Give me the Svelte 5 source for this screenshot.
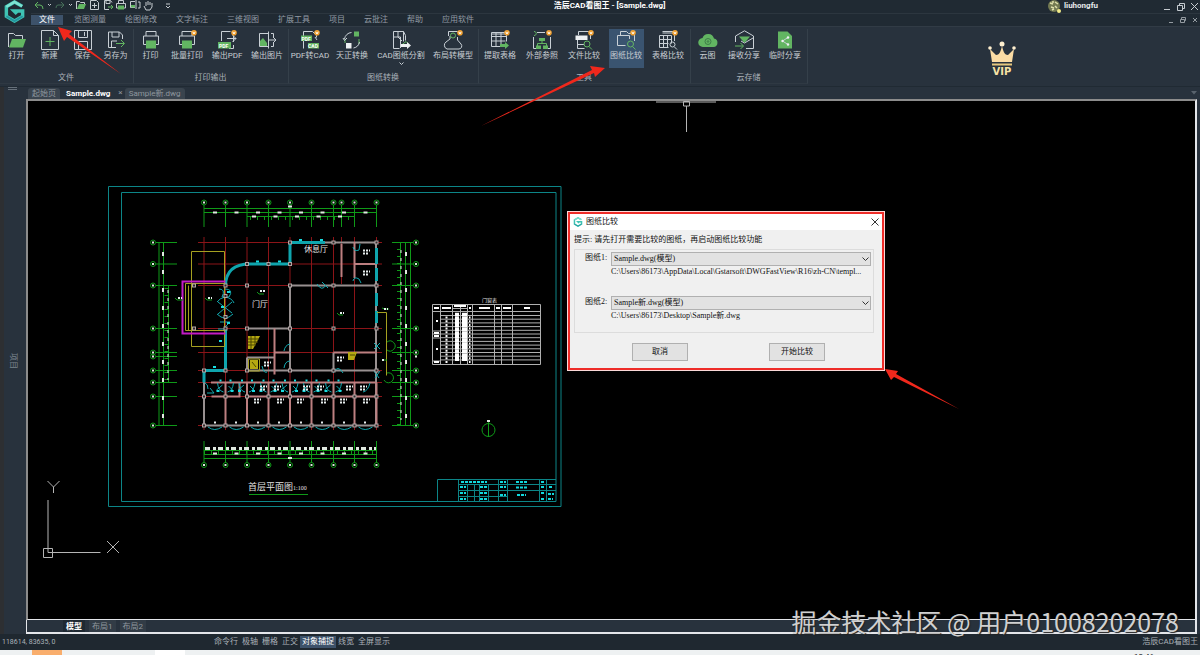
<script lang="ts">
  const menus = ['文件', '览图测量', '绘图修改', '文字标注', '三维视图', '扩展工具', '项目', '云批注', '帮助', '应用软件']

  const groups = [
    { title: '文件', tools: [
      { label: '打开', icon: 'open', size: 's' },
      { label: '新建', icon: 'new', size: 's' },
      { label: '保存', icon: 'save', size: 's' },
      { label: '另存为', icon: 'saveas', size: 's' },
    ] },
    { title: '打印输出', tools: [
      { label: '打印', icon: 'print', size: 's' },
      { label: '批量打印', icon: 'print', size: 'm', vip: true },
      { label: '输出PDF', icon: 'pdf', size: 'm', vip: true },
      { label: '输出图片', icon: 'image', size: 'm' },
    ] },
    { title: '图纸转换', tools: [
      { label: 'PDF转CAD', icon: 'pdfcad', size: 'l', vip: true },
      { label: '天正转换', icon: 'convert', size: 'l' },
      { label: 'CAD图纸分割', icon: 'split', size: 'xxl', more: true },
      { label: '布局转模型', icon: 'layout', size: 'xl', vip: true },
    ] },
    { title: '工具', tools: [
      { label: '提取表格', icon: 'table', size: 'l', vip: true },
      { label: '外部参照', icon: 'xref', size: 'l', vip: true },
      { label: '文件比较', icon: 'filecmp', size: 'l', vip: true },
      { label: '图纸比较', icon: 'dwgcmp', size: 'l', vip: true, active: true },
      { label: '表格比较', icon: 'tablecmp', size: 'l', vip: true },
    ] },
    { title: '云存储', tools: [
      { label: '云图', icon: 'cloud', size: 's' },
      { label: '接收分享', icon: 'receive', size: 'm' },
      { label: '临时分享', icon: 'share', size: 'l' },
    ] },
  ]

  const toggles = ['命令行', '极轴', '栅格', '正交', '对象捕捉', '线宽', '全屏显示']

  const drawings = [
    { id: 'dwg1', label: '图纸1:', name: 'Sample.dwg(模型)', path: 'C:\\Users\\86173\\AppData\\Local\\Gstarsoft\\DWGFastView\\R16\\zh-CN\\templ...' },
    { id: 'dwg2', label: '图纸2:', name: 'Sample新.dwg(模型)', path: 'C:\\Users\\86173\\Desktop\\Sample新.dwg' },
  ]

  // floor plan axes
  const cols = [204, 225.5, 247, 268.5, 290, 311.5, 333.5, 341.5, 354.5, 376.5]
  const bays = [204, 225.5, 247, 268.5, 290, 311.5, 333.5, 354.5, 376.5]
  const rows = [242.5, 264, 285.5, 328.5, 352.5, 356.5, 370.5, 382.5, 396.5, 425.5]
  const columns = [
    [290, 242.5], [333.5, 242.5], [376.5, 242.5], [247, 264], [268.5, 264], [290, 264],
    [225.5, 285.5], [247, 285.5], [290, 285.5], [333.5, 285.5], [376.5, 285.5],
    [225.5, 296], [225.5, 317], [225.5, 328.5], [247, 328.5], [290, 328.5], [333.5, 328.5], [376.5, 328.5],
    [194, 285.5], [194, 328.5], [204, 370.5], [225.5, 370.5], [247, 370.5], [290, 370.5], [333.5, 370.5], [376.5, 370.5],
    ...bays.map((x) => [x, 396.5]), ...bays.map((x) => [x, 425.5]),
  ]
  const notes = [[366, 252], [366, 273], [340, 359], [267, 364], [263, 388], [277, 388], [257, 401], [280, 401], [306, 388], [320, 388], [300, 401], [324, 401], [349, 388], [363, 388], [343, 401], [366, 401]]
  const tableCols = [440.5, 452.5, 460.5, 467.5, 472.5, 494.5, 501.5, 512.5]
  const tableRows = Array.from({ length: 13 }, (_, i) => 315.5 + i * 3.7)
</script>

{#snippet logo()}
  <svg class="mark" viewBox="0 0 24 24">
    <path d="M20 6.500 12 2 3.500 7v10l8.500 5 8.500-5v-5.500h-9l3 3" fill="none" stroke="#3fc4b4" stroke-width="3.600" />
    <path d="M3.500 7 12 2l8 4.500" fill="none" stroke="#7fe3d2" stroke-width="2.500" />
    <path d="M3.500 17l8.500 5 8.500-5" fill="none" stroke="#2496a0" stroke-width="2" />
  </svg>
{/snippet}

{#snippet icon(name, vip)}
  <svg class="icon" viewBox="0 0 20 20">
    {#if name === 'open'}
      <path d="M1.500 17V3.500h5l2 2h7V9" />
      <path class="g" d="M5 9h14l-3 8.500H2z" />
    {:else if name === 'new'}
      <path d="M1.500.5h12l5 5v14h-17zM13.500.5v5h5" />
      <path class="gl" d="M10 7v9M5.500 11.500h9" />
    {:else if name === 'save'}
      <path d="M1.500.5h17v19h-17zM5.500.5v7h9v-7M11.500 2v4M5.500 19v-7.500h9V19" />
    {:else if name === 'saveas'}
      <path d="M10 17.500H2.500V2h11l3 3v4M6 2v5h7V2M5.500 17v-6H11" />
      <path class="gl" d="M10 13.500h8M15 10l3.500 3.500L15 17" />
    {:else if name === 'print'}
      <path d="M5 6V1.500h10V6M5 14.500H2.500V6h15v8.500H15" />
      <path class="g" d="M5 10.500h10v8H5z" />
    {:else if name === 'pdf'}
      <path d="M4.500 11V1.500h9M16.500 12V5.500M10 8.500h9M15.500 5l3.500 3.500-3.500 3.500M12 18.500h4.500V15" />
      <path class="g" d="M1 12h13v6.500H1z" />
      <text x="2" y="17.500">PDF</text>
    {:else if name === 'image'}
      <path d="M11 3.500H2.500v13H11M11.500 1.500v17M14 3.500h2.500V7M16.500 13v3.500H14M11 10h8M16 7l3 3-3 3" />
      <path class="g" d="M3 16v-5l3-3 4 5v3z" />
    {:else if name === 'pdfcad'}
      <path d="M3.500 18.500v-17h9l4 4v2M15 7l2 3" />
      <path class="g" d="M1 5.500h11v5.500H1zM8 13h11v5.500H8z" />
      <text x="1.500" y="10.500">PDF</text><text x="8" y="18">CAD</text>
    {:else if name === 'convert'}
      <path class="gl" d="M3 13V9M17 9v5" />
      <path d="M2.500 9a7.500 7.500 0 0 1 7-6.500M17.500 12a7.500 7.500 0 0 1-6 6M1 8l1.500 2.500L5 8" />
      <path class="g" d="M12 1.500h5v5h-5z" />
      <path class="w" d="M4 13h5.500v5.500H4z" />
    {:else if name === 'split'}
      <path d="M2.500 1.500h10v10M2.500 1.500v17h6M2.500 7h7v11M7 1.500V7l4 4M12.500 1.500l2 4v5" />
      <path class="gl" d="M10 15.500l5-4 3 3" />
      <path class="w" d="M10 14h6v-2l4 3.500-4 3.500v-2h-6z" />
    {:else if name === 'layout'}
      <path d="M5.500 1.500h9M5.500 1.500V6M14.500 7v3l3.500 4a3 3 0 0 1-2 5H4a4 4 0 0 1-1-7l4-3V6" />
      <circle class="gl" cx="10" cy="5.500" r="2.500" />
    {:else if name === 'table'}
      <path d="M1.500 2.500h15v9M1.500 2.500v14h9M1.500 6.500h15M1.500 11h14M6 2.500v14M11 2.500v12M1.500 4h15" />
      <path class="g" d="M10 14h5v-2l4 3.500-4 3.500v-2h-5z" />
    {:else if name === 'xref'}
      <path d="M1.500 7v11.500h4M18.500 7v11.500h-4M5 2.500h8" />
      <path class="gl" d="M2 1.500c3 0 3 4 0 4M10 10v4M5.500 16v-2.500h9V16" />
      <path class="g" d="M7 8h6v3H7zM4 15.500h5V19H4zM11 15.500h5V19h-5z" />
    {:else if name === 'filecmp'}
      <path d="M4.500 5V1.500h10l2 2V9M3.500 10v8.500h7M3 14.500h7" />
      <path class="w" d="M1.500 5.500h12V10h-12z" />
      <path class="gl" d="M15 16.500l3 3" /><circle class="gl" cx="13" cy="14" r="3" />
    {:else if name === 'dwgcmp'}
      <path d="M4.500 5V1.500h6l2 2h6V11M1.500 5.500h12V9M1.500 5.500v10h8" />
      <path class="gl" d="M16.500 16.500l3 3" /><circle class="gl" cx="14.500" cy="14" r="3" />
    {:else if name === 'tablecmp'}
      <path d="M4.500 1.500h12M4.500 3h12M1.500 5.500h12v8M1.500 5.500v12h9M1.500 9.500h12M1.500 13.500h9M5.500 5.500v12M9.500 5.500v12M16.500 3v8" />
      <path d="M16.500 17l2.500 2.500" /><circle cx="14.500" cy="14.500" r="2.500" />
    {:else if name === 'cloud'}
      <path class="g" d="M5 17a4.500 4.500 0 0 1-.5-9A6 6 0 0 1 16 8.500 4.300 4.300 0 0 1 15.500 17z" />
      <circle class="d" cx="10" cy="11.500" r="3" /><circle class="d" cx="10" cy="11.500" r=".8" />
    {:else if name === 'receive'}
      <path d="M1.500 12V6L10.500.8 19.500 6v12.500H12M7 11l3.500 2L19 8" />
      <path class="g" d="M5 6.500h11L10.500 13z" />
      <path class="gl" d="M1 16h8M6.500 13l3 3-3 3" />
    {:else if name === 'share'}
      <path class="g" d="M3 1.500h9.500L17 6v12.500H3z" />
      <path d="M13 7.500L7.500 11l5.500 3.500" />
      <circle class="w" cx="13" cy="7.500" r="1.200" /><circle class="w" cx="7.500" cy="11" r="1.200" /><circle class="w" cx="13" cy="14.500" r="1.200" />
    {/if}
    {#if vip}
      <circle cx="17" cy="2.800" r="2.800" class="v" /><path d="M15.800 1.800L17 4l1.200-2.200" class="vl" />
    {/if}
  </svg>
{/snippet}

<div class="app">
  <header class="head">
    <div class="brand">{@render logo()}</div>
    <div class="bars">
      <div class="titlebar">
        <svg class="quick" width="140" height="12" viewBox="0 0 140 12">
          <path class="gl" d="M5 5h4q3 0 3 4M7 2L4 5l3 3" />
          <path d="M17 4l1.500 1.500L20 4M38 4l1.500 1.500L41 4" />
          <path class="dim" d="M32 5h-5q-2 0-2 3M30 2l3 3-3 3" />
          <path d="M45.500 9V1.500h3l1 1h4V4" /><path class="g" d="M48 4h7l-2 5h-7z" />
          <path d="M59.500.5h6l2 2v7h-8zM63.500 3v5M61 5.500h5" />
          <path d="M78 9.500h-4.500v-9h6l1.500 2M75 .5v3h4v-3" /><path class="gl" d="M77 7h5M80 5l2 2-2 2" />
          <path d="M87.500 3V.5h5V3M87 8h-1.500V3.500h9V8H93" /><path class="g" d="M87 5.500h6V9.500h-6z" />
          <path d="M104 1.500h-4.500v6h4.500M105 0v9M107 2h2v6h-2" /><path class="g" d="M100 5h4v2.500h-4z" />
          <path d="M113 6l2 4h4l2-3V3M115 6V2M117 5V1M119 5V2" />
          <path d="M135 4h4M135 6l2 2 2-2" />
        </svg>
        <h1>浩辰CAD看图王 - [Sample.dwg]</h1>
        <div class="user">
          <svg width="14" height="13" viewBox="0 0 14 13">
            <circle cx="6" cy="6" r="6" fill="#737a52" />
            <path d="M2 3l3 1M7 2l3 2M3 7l3 1M7 6l2 2M4 10l2-1M5 1v2" stroke="#dfe0ac" stroke-width="1.500" />
            <circle cx="11" cy="11" r="2" fill="#f3ec8a" />
          </svg>
          <span>liuhongfu</span>
          <svg class="win" width="36" height="12" viewBox="0 0 36 12">
            <path d="M0 9.500h6M13.500 5.500h5v5h-5zM15.500 5V3.500h5v5H19M27 3l7 7M34 3l-7 7" />
          </svg>
        </div>
      </div>
      <nav class="menubar">
        {#each menus as m, i}
          <button class="menu" class:on={i === 0}>{m}</button>
        {/each}
        <svg class="sub" width="28" height="8" viewBox="0 0 28 8">
          <path d="M0 6.500h4M11.500 3.500h4v3h-4zM12.500 3V1.500h4v3H16M24 2l4 4M28 2l-4 4" />
        </svg>
      </nav>
    </div>
  </header>

  <section class="ribbon">
    {#each groups as g}
      <div class="group">
        <div class="tools">
          {#each g.tools as t}
            <div class="cell {t.size}">
              <button class="tool" class:active={t.active}>
                {@render icon(t.icon, t.vip)}
                <span>{t.label}</span>
                {#if t.more}<svg class="more" width="5" height="4" viewBox="0 0 5 4"><path d="M.5.5l2 2 2-2" /></svg>{/if}
              </button>
            </div>
          {/each}
        </div>
        <div class="gtitle">{g.title}</div>
      </div>
    {/each}
    <div class="vip">
      <svg width="28" height="26" viewBox="0 0 28 26">
        <path d="M4 21L2 8l6 6c4 0 5-5 6-9 1 4 2 9 6 9l6-6-2 13z" fill="#fbdca4" />
        <path d="M4 23.500h20" stroke="#e4c67e" stroke-width="2" />
        <g fill="#fff0cf"><circle cx="14" cy="3" r="2.500" /><circle cx="2" cy="7" r="1.800" /><circle cx="26" cy="7" r="1.800" /></g>
      </svg>
      <span>VIP</span>
    </div>
  </section>

  <div class="work">
    <aside class="rail">
      <i class="grip"></i>
      <span>项目</span>
    </aside>
    <main class="docs">
      <div class="tabs">
        <button class="tab">起始页</button>
        <button class="tab on">Sample.dwg</button>
        <span class="close">×</span>
        <button class="tab">Sample新.dwg</button>
        <svg class="drop" width="6" height="4" viewBox="0 0 6 4"><path d="M0 0h6L3 3.500z" fill="#59636d" /></svg>
      </div>

      <div class="canvas">
        <svg class="plan">
          <g transform="translate(-28 -101)">
            <g class="frame">
              <path d="M108.500 186.500h452.500v320H108.500zM121.500 192.500h434.500v309H121.500z" />
              <path d="M437.500 501v-21.500H556M458.500 480v21M458.500 484.500H556M458.500 490.500H556M458.500 496.500h49M467.500 485v16M474.500 485v16M479.500 485v16M488.500 485v16M498.500 480v21M507.500 480v21M539.500 480v21M546.500 480v21" />
              <path class="blob" d="M461 482h26M500 482h6M500 487h6M500 495h6M460 487h6M460 493h6M460 499h6M480 487h7M480 493h7M480 499h7M516 482h11M516 487.500h11M517 495h9M541 482h4M541 487h4M541 493h4M541 499h4M549 487h4M548 494h6M548 499h5" />
            </g>

            <g class="axis">
              {#each cols as x}
                <path d="M{x} 237V{x === 341.5 ? 284 : 430}" />
              {/each}
              {#each rows as y}
                {#if y !== 356.5}<path d="M198 {y}h184" />{/if}
              {/each}
            </g>

            <g class="dim">
              {#each cols as x}
                <circle cx={x} cy="202.500" r="2.500" /><path d="M{x} 205v22" />
              {/each}
              {#each bays as x}
                <circle cx={x} cy="465" r="2.500" /><path d="M{x} 441v22" />
              {/each}
              {#each rows as y}
                <circle cx="153" cy={y} r="2.500" /><path d="M156 {y}h21" />
                {#if y !== 356.5}<circle cx="416" cy={y} r="2.500" /><path d="M392 {y}h21" />{/if}
              {/each}
              <path d="M204 208.500h172M204 212.500h172M247 216.500h108M204 450.500h172M204 454.500h172M204 458.500h172" />
              <path d="M159 242v184M163.500 242v184M168.500 285v98M400.500 242v184M405.500 242v184M410.500 242v184" />
              <path class="tick" d="M250 218h105M204 452h172M166.500 288v94M399 242v184" />
              <circle cx="488.500" cy="430" r="6.500" /><path d="M488.500 422v15M488.500 430v6" />
              <path d="M249 494.500h59" />
            </g>
            <g class="nums">
              <path d="M213 212.500h160" /><path d="M252 216.500h102" /><path class="dense" d="M205 448.500h171" />
              <path d="M213 453.500h160" /><path class="v1" d="M163 252v172M406 252v172" /><path class="v2" d="M168 290v90M401 250v170" />
              <path class="pts" d="M288 206.500h4M288 458h4M487 421h3" />
              {#each cols as x}<path class="pts" d="M{x - 1} 202.500h2" />{/each}
              {#each bays as x}<path class="pts" d="M{x - 1} 465h2" />{/each}
              {#each rows as y}<path class="pts" d="M152 {y}h2M415 {y}h2" />{/each}
            </g>

            <g class="wall gray">
              <path d="M290 242.500h86v183M290 285.500v85M290 285.500h86M247 328.500h43M247 357.500h27M247 357.500v13h129M333.500 370.500v-18M204 370.500v55h172" />
            </g>
            <g class="wall pink">
              <path d="M341.500 244v33M354.500 242v36M355 264h21M274.500 328.500v46M333.500 352.500h43M274.500 352.500h15M211 382.500h165M211.500 396.500h28v-14M247 396.500h129" />
              {#each bays.slice(1) as x}<path d="M{x} 382.500v43" />{/each}
            </g>
            <g class="glass">
              <path d="M225.500 285.500Q226 264 250 264h40v-21.500h35M225.500 328.500v42H204v12M376.500 248v16M376.500 268v13M376.500 293v13M376.500 311v12" />
            </g>
            <g class="door">
              {#each bays.slice(0, -1) as x}<path d="M{x + 4} 427q6.500 5 14 0" />{/each}
              {#each [225.5, 247, 268.5, 290, 311.5, 333.5] as x}
                <path d="M{x - 8} 383q1 8 6 9M{x + 8} 383q-1 8-6 9M{x - 9} 390l6-5M{x + 3} 386l5 5" />
                <path class="blob" d="M{x - 6} 380.500h2M{x + 4} 380.500h2M{x - 9} 391h3M{x + 5} 391h3" />
              {/each}
              <path d="M205 383q3 1 3 6M207 393h7l-4-5M370 383q-2 8-7 9" />
              <path d="M219 289q7 0 3 8h7q5-8-4-8M217 302q3-4 8-5 7 1 9 6M218 302l14 11M232 302l-14 12M217 314q8 8 16 0M220 322h10l-5 5M218 329h9" />
              <path d="M317 284q5 8 9 1M322 282l6 6M353 247q1 5 6 3l1-6M353 281q1-5 6-2l2 4M284 368q1-7 6-7M284 351q1-6 6-7M333 373q5-9 10 0M374 343l6 6M380 343l-6 6M374 371l5 7M380 371l-5 7M262 366q2 8 5 6" />
              <path class="blob" d="M256 261.500h3M278 261.500h3M299 240h3M320 240h3M227 292h3M221 307h3M227 323h3M213 367h3M219 341h3" />
            </g>

            <g class="porch">
              <path d="M191.500 251.500h33v95h-33zM185.500 283.500h39M185.500 283.500v47h39M188.500 285.500v45M191.500 285.500v45M377 312.500h9.500v63M248.500 359h11v12h-11z" />
              <path class="fill" d="M248 336h12l-7 13h-5zM348 352h9l-3 8h-6zM250 360h8v9h-8z" />
              <path class="hatch" d="M248 339h11M248 342h10M248 345h8M251 336v13M255 336v9M350 355h5M252 362l4 5" />
              <path class="mag" d="M225.500 281.500h-43v52h43" />
              <path class="green" d="M387 342a5 5 0 1 1 0 8M387 373a5 5 0 1 1-3 7M175 298l2 2h6M205 298l2 2h5M257 292l2 2h5M337 313l2 2h4M382 308l3 1h4M383 360h4" />
            </g>
            <g class="nodes">
              {#each columns as [x, y]}<rect x={x - 1.5} y={y - 1.5} width="3" height="3" />{/each}
            </g>
            <g class="notes">
              {#each notes as [x, y]}<path d="M{x - 3} {y - 1.5}h7M{x - 3} {y + 1.5}h5" />{/each}
              <path d="M178 298h4M208 298h4M260 291h5M340 313h4M384 309h4M214 422.500h2M235 422.500h2M257 422.500h3M278 422.500h2M300 422.500h2M321 422.500h3M343 422.500h2M364 422.500h3M382 360h3" />
            </g>

            <g class="label">
              <text x="252" y="307" font-size="8">门厅</text>
              <text x="304" y="252" font-size="8">休息厅</text>
              <text x="248" y="490" font-size="9">首层平面图</text>
              <text x="293" y="490" font-size="6" class="scale">1:100</text>
              <text x="482" y="302" font-size="5">门窗表</text>
            </g>

            <g class="sched">
              <path d="M432.500 304.500h108v60h-108zM440.500 311.500h100M452.500 308.500h15" />
              {#each tableCols as x}<path d="M{x} 304.500v60" />{/each}
              {#each tableRows as y}<path d="M440.500 {y}h100" />{/each}
              <path d="M432.500 311.500h8M432.500 331h8M432.500 334h8M432.500 338h8M432.500 361h8" />
              <path class="txt" d="M434 308h5M442 308h9M454 306h12M469 308h2M479 308h11M496 308h4M503 308h8M524 308h6M436 321h2M434 333h5M434 336h5M436 349h2M434 362h5" />
              {#each tableRows as y}
                <path class="txt" d="M445.500 {y + 2}h2M455 {y}h4M462 {y}h5M455 {y - 1.8}h4M462 {y - 1.8}h5M469 {y + 2}h1.500" />
              {/each}
            </g>

            <g class="ucs">
              <path d="M48 500v52.500h52.500M43.500 548.500h9v9h-9zM47.500 481l6 6 6-6M53.500 487v6M107 541l12 12M119 541l-12 12" />
              <path d="M656 102h60M683.500 101.500h6v4.500h-6zM686.500 106v26" />
            </g>
          </g>
        </svg>

        <div class="dialog" role="dialog" aria-label="图纸比较">
          <div class="dhead">
            {@render logo()}
            <span>图纸比较</span>
            <button class="x" aria-label="关闭"><svg width="8" height="8" viewBox="0 0 8 8"><path d="M.5.5l7 7M7.500.5l-7 7" /></svg></button>
          </div>
          <p class="hint">提示: 请先打开需要比较的图纸，再启动图纸比较功能</p>
          <div class="box">
            {#each drawings as d}
              <div class="field">
                <label for={d.id}>{d.label}</label>
                <div class="pick">
                  <select id={d.id}><option>{d.name}</option></select>
                  <svg width="7" height="5" viewBox="0 0 7 5"><path d="M.5.5l3 3 3-3" /></svg>
                </div>
                <span class="path">{d.path}</span>
              </div>
            {/each}
          </div>
          <div class="actions">
            <button>取消</button>
            <button>开始比较</button>
          </div>
        </div>
      </div>

      <div class="layouts">
        <button class="on">模型</button>
        <button>布局1</button>
        <button>布局2</button>
      </div>
    </main>
  </div>

  <footer class="status">
    <span class="coords">118614, 83635, 0</span>
    <div class="toggles">
      {#each toggles as t}
        <button class:on={t === '对象捕捉'}>{t}</button>
      {/each}
    </div>
    <span class="product">浩辰CAD看图王</span>
  </footer>
  <div class="taskbar"><i class="orange"></i><i class="white"></i><span>10:46</span></div>

  <svg class="arrows">
    <path d="M58 27l14 4-3 3 52 40-54-37-3 4z" />
    <path d="M605 68l-10 9-1-4-113 53 111-56-2-4z" />
    <path d="M885 369l13 2-2 3 63 35-65-32-3 3z" />
  </svg>
  <div class="watermark">掘金技术社区 @ 用户01008202078</div>
</div>

<style>
  :global(body) {
    margin: 0;
    background: #28323d;
  }
  .app {
    position: relative;
    display: flex;
    flex-direction: column;
    height: 100vh;
    overflow: hidden;
    font-family: Roboto, "Noto Sans CJK SC", sans-serif;
    font-size: 8px;
    line-height: 12px;
    color: #c9ced3;
  }
  button {
    font: inherit;
    color: inherit;
    background: none;
    border: 0;
    padding: 0;
    white-space: nowrap;
  }
  svg { display: block; flex: none; }

  .head {
    display: flex;
    background: #202a33;
  }
  .brand {
    width: 31px;
    padding: 0 0 0 3px;
    box-sizing: border-box;
  }
  .mark { width: 23px; height: 23px; }
  .bars { flex: 1; }
  .titlebar {
    display: grid;
    grid-template-columns: 1fr auto 1fr;
    height: 13px;
    border-bottom: 1px solid #2c363f;
  }
  .quick path {
    fill: none;
    stroke: #c5cbd0;
  }
  .quick path.g { fill: #62b562; stroke: none; }
  .quick path.gl { stroke: #62b562; }
  .quick path.dim { stroke: #47715a; }
  h1 {
    margin: 0;
    padding-right: 12px;
    font-size: 8px;
    line-height: 11px;
    color: #fff;
  }
  .user {
    display: flex;
    justify-content: flex-end;
    gap: 2px;
    font-weight: bold;
    color: #e6e9eb;
  }
  .win { margin-left: 64px; }
  .win path, .sub path { fill: none; stroke: #c5cbd0; }
  .menubar {
    display: flex;
    align-items: center;
    height: 12px;
    gap: 3px;
    color: #929ba3;
  }
  .menu {
    padding: 0 8px;
    line-height: 10px;
  }
  .menu.on {
    background: #3d526a;
    color: #fff;
  }
  .sub { margin: 0 3px 0 auto; opacity: 0.7; }

  .ribbon {
    display: flex;
    height: 55px;
    padding: 2px 0;
    background: #28323d;
    border-top: 1px solid #313b45;
  }
  .group {
    display: flex;
    flex-direction: column;
    justify-content: space-between;
    padding-right: 1px;
    border-right: 1px solid #35404a;
    border-bottom: 1px solid #2f3943;
  }
  .tools { display: flex; }
  .cell { display: flex; justify-content: center; }
  .s { width: 33px; }
  .m { width: 40px; }
  .l { width: 42px; }
  .xl { width: 48px; }
  .xxl { width: 56px; }
  .tool {
    display: flex;
    flex-direction: column;
    align-items: center;
    height: 39px;
    min-width: 33px;
    padding-top: 1px;
  }
  .tool.active {
    min-width: 35px;
    background: #3a5470;
  }
  .icon { width: 20px; height: 20px; overflow: visible; }
  .icon path, .icon circle { fill: none; stroke: #c9d0d6; }
  .icon .g { fill: #62b562; stroke: none; }
  .icon .gl { stroke: #62b562; }
  .icon .w { fill: #eef1f3; stroke: none; }
  .icon .d { stroke: #3d7d47; }
  .icon .v { fill: #f0a030; stroke: none; }
  .icon .vl { stroke: #fff; }
  .icon text {
    font-size: 5px;
    font-weight: bold;
    fill: #fff;
  }
  .more path { fill: none; stroke: #c9d0d6; }
  .gtitle {
    text-align: center;
    color: #aab1b8;
    line-height: 11px;
  }
  .vip {
    display: flex;
    flex-direction: column;
    align-items: center;
    margin: 12px 184px 0 auto;
    font-family: "DejaVu Sans", sans-serif;
    font-size: 10px;
    line-height: 10px;
    font-weight: bold;
    color: #f7e3a6;
  }

  .work {
    display: flex;
    flex: 1;
    min-height: 0;
    background: #28323d;
    border-top: 1px solid #202a33;
  }
  .rail {
    display: flex;
    flex-direction: column;
    align-items: center;
    justify-content: center;
    width: 26px;
    position: relative;
    box-sizing: border-box;
    padding-right: 5px;
    border-left: 4px solid #2d2f32;
    color: #7a848d;
  }
  .rail span {
    writing-mode: vertical-rl;
    text-orientation: sideways;
  }
  .grip {
    position: absolute;
    top: 0;
    width: 9px;
    height: 1px;
    border: solid #66707a;
    border-width: 1px 0;
  }
  .docs {
    display: flex;
    flex: 1;
    flex-direction: column;
    min-width: 0;
    margin-right: 3px;
  }
  .tabs {
    display: flex;
    align-items: center;
    height: 12px;
    padding-left: 2px;
    color: #8f979e;
  }
  .tab {
    padding: 0 4px;
    background: #3a444e;
    border-radius: 3px 3px 0 0;
    line-height: 11px;
  }
  .tab.on {
    padding: 0 6px;
    background: none;
    color: #fff;
    font-weight: bold;
  }
  .close { margin: 0 2px; }
  .drop { margin-left: auto; }
  .canvas {
    flex: 1;
    position: relative;
    min-height: 0;
    background: #000;
    border: 2px solid #8c8c8c;
    border-right-color: #e4e6ea;
    border-bottom: 1px solid #e4e6ea;
  }
  .plan {
    position: absolute;
    inset: 0;
    width: 100%;
    height: 100%;
    fill: none;
  }
  .frame { stroke: #0c8587; }
  .frame .blob { stroke: #12d8dc; stroke-width: 2; stroke-dasharray: 3 1; }
  .axis { stroke: #8c1418; }
  .dim { stroke: #0f9a18; }
  .dim .tick { stroke-width: 4; stroke-dasharray: 1 6; }
  .nums { stroke: #dfe8df; stroke-width: 2; stroke-dasharray: 4 17.500; }
  .nums .dense { stroke-width: 3; stroke-dasharray: 5 3 3 2; }
  .nums .v1 { stroke-dasharray: 4 14; }
  .nums .v2 { stroke-width: 1; stroke-dasharray: 3 5; }
  .nums .pts { stroke-dasharray: none; }
  .wall { stroke-width: 2; }
  .gray { stroke: #989090; }
  .pink { stroke: #bd7f80; }
  .glass { stroke: #0fa5ad; stroke-width: 3; }
  .door { stroke: #12a9b0; }
  .door .blob { stroke: #18dbe0; stroke-width: 2; }
  .porch { stroke: #a5a020; }
  .porch .fill { fill: #b5a812; stroke: none; }
  .porch .hatch { stroke: #4b4600; }
  .porch .mag { stroke: #c41ac4; stroke-width: 2; }
  .porch .green { stroke: #0f9a18; }
  .nodes { stroke: #b0a4a4; fill: #302828; }
  .notes { stroke: #e8eeee; stroke-width: 2; stroke-dasharray: 2 1; }
  .label {
    fill: #e2e2e2;
    font-family: "Noto Sans CJK SC", sans-serif;
  }
  .label .scale { font-family: "Liberation Serif", serif; }
  .sched { stroke: #b0b0b0; }
  .sched .txt { stroke: #fff; stroke-width: 2; }
  .ucs { stroke: #b5b5b5; }

  .dialog {
    position: absolute;
    top: 110px;
    left: 539px;
    width: 312px;
    height: 154px;
    border: 2px solid #ee2c28;
    outline: 1px solid #fbd9d8;
    margin: 1px;
    background: #f0f0f0;
    color: #111;
    font-family: "Liberation Serif", "Noto Sans CJK SC", serif;
  }
  .dhead {
    display: flex;
    align-items: center;
    gap: 3px;
    height: 16px;
    padding: 0 3px;
    background: #fff;
  }
  .dhead .mark { width: 10px; height: 10px; }
  .x { margin-left: auto; }
  .x path, .pick path { fill: none; stroke: #333; }
  .hint {
    margin: 4px 4px 3px;
    white-space: nowrap;
  }
  .box {
    display: grid;
    gap: 18px;
    height: 84px;
    margin: 0 8px 0 4px;
    padding: 2px 2px 0 10px;
    box-sizing: border-box;
    align-content: start;
    border: 1px solid #dcdcdc;
  }
  .field {
    display: grid;
    grid-template-columns: 26px 1fr;
    line-height: 12px;
  }
  .pick { display: grid; align-items: center; }
  .pick select, .pick svg { grid-area: 1 / 1; }
  .pick svg { justify-self: end; margin-right: 2px; }
  .pick select {
    appearance: none;
    width: 100%;
    height: 14px;
    padding: 0 2px;
    font: inherit;
    color: inherit;
    background: #e2e2e2;
    border: 1px solid #b0b0b0;
    border-radius: 0;
  }
  .path { grid-column: 2; white-space: nowrap; }
  .actions {
    display: flex;
    justify-content: space-between;
    margin: 10px 57px 0 62px;
  }
  .actions button {
    width: 56px;
    height: 18px;
    background: #e2e2e2;
    border: 1px solid #b0b0b0;
  }

  .layouts {
    display: flex;
    height: 12px;
    padding-left: 36px;
    gap: 4px;
    border: solid #e4e6ea;
    border-width: 0 2px 2px 1px;
    color: #8f979e;
  }
  .layouts button { padding: 0 3px; line-height: 11px; background: #323c46; }
  .layouts .on {
    background: #1f2932;
    color: #fff;
    font-weight: bold;
  }
  .status {
    display: flex;
    align-items: center;
    height: 16px;
    background: #1f2830;
    color: #aab1b8;
  }
  .coords { width: 212px; padding-left: 2px; font-size: 7px; box-sizing: border-box; }
  .toggles { display: flex; }
  .toggles button { padding: 0 2px; }
  .toggles .on { background: #3d526a; color: #fff; }
  .product { margin: 0 2px 0 auto; }
  .taskbar {
    display: flex;
    height: 5px;
    overflow: hidden;
    background: #eef1f2;
    color: #222;
  }
  .orange { width: 30px; margin-left: 32px; background: #f9ae6d; }
  .white { width: 30px; margin-left: 93px; background: #fff; }
  .taskbar span { margin: 0 46px 0 auto; line-height: 14px; }

  .arrows {
    position: absolute;
    inset: 0;
    width: 100%;
    height: 100%;
    fill: #f0281c;
    pointer-events: none;
  }
  .watermark {
    position: absolute;
    right: 21px;
    bottom: 18px;
    font-family: "Noto Sans CJK SC", sans-serif;
    font-size: 25px;
    line-height: 32px;
    color: #d0d0d0;
    text-shadow: 1px 1px 1px #222;
    white-space: nowrap;
  }
</style>
